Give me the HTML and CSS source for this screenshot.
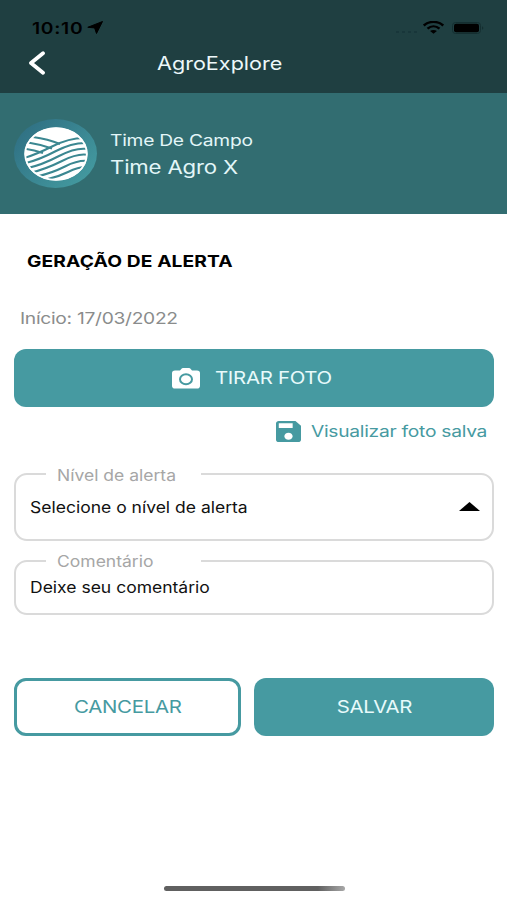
FILE: index.html
```html
<!DOCTYPE html>
<html lang="pt-BR">
<head>
    <meta charset="UTF-8">
    <meta name="viewport" content="width=device-width, initial-scale=1.0">
    <title>AgroExplore</title>
    <link rel="stylesheet" href="styles.css">
</head>
<body>

    <header class="header">
        <div class="status-bar">
            <span class="text status-time">10:10</span>
            <svg class="icon-location" viewBox="0 0 16 13" preserveAspectRatio="none"><path d="M15.500.5L.8 6.300l6.800.6L9.500 12.500z" stroke="#000" stroke-linejoin="round"/></svg>
            <div class="status-icons">
                <div class="signal"><i></i><i></i><i></i><i></i></div>
                <svg class="icon-wifi" viewBox="0 0 20 13" preserveAspectRatio="none">
                    <path d="M.8 4.500C6-.3 14-.3 19.200 4.500M4.300 7.600c3.400-3 8-3 11.400 0" fill="none" stroke="#000" stroke-width="2.400"/>
                    <path d="M10 12.800L6.700 10c1.900-1.500 4.700-1.500 6.600 0z"/>
                </svg>
                <svg class="icon-battery" viewBox="0 0 32 12">
                    <rect x=".5" y=".5" width="28" height="11" rx="3" fill="none" stroke="#142e30"/>
                    <rect x="2" y="1.700" width="25" height="8.600" rx="2"/>
                    <path d="M30 4.200c1.800.6 1.800 3 0 3.600z" fill="#142e30"/>
                </svg>
            </div>
        </div>
        <div class="title-bar">
            <svg class="icon-back" viewBox="0 0 18 24"><path d="M15 2.200L3 12l12 9.800" fill="none" stroke="#fff" stroke-width="3.800" stroke-linecap="round" stroke-linejoin="round"/></svg>
            <h1 class="text title">AgroExplore</h1>
        </div>
    </header>

    <section class="team">
        <div class="team-logo">
            <svg viewBox="0 0 64 54" preserveAspectRatio="none">
                <defs><clipPath id="field"><ellipse cx="32" cy="27" rx="31" ry="26"/></clipPath></defs>
                <ellipse cx="32" cy="27" rx="31.500" ry="26.500" fill="#fff"/>
                <g clip-path="url(#field)" fill="none" stroke="#3b8791" stroke-width="2">
                    <path d="M9 10Q24 12 36 17M4 15.500Q17 17.500 28 21.500M0 21.500Q10 23 19 26"/>
                    <path d="M0 31Q11 28 28 19.500T60 11M0 36.500Q15 33 32 24T64 16M2 41.500Q18 38 35 29T64 22M6 46Q22 42 38 34T64 28M13 49.500Q28 46 41 39.500T64 34M22 52.500Q34 50 44 45T62 40"/>
                </g>
                <ellipse cx="32" cy="27" rx="30.800" ry="25.800" fill="none" stroke="#fff" stroke-width="1.800"/>
            </svg>
        </div>
        <div class="team-info">
            <div class="text team-label">Time De Campo</div>
            <div class="text team-name">Time Agro X</div>
        </div>
    </section>

    <main class="content">
        <h2 class="text heading">GERAÇÃO DE ALERTA</h2>
        <div class="text start-date">Início: 17/03/2022</div>

        <button class="btn btn-photo">
            <svg class="icon-camera" viewBox="0 0 28 21">
                <path d="M3 2.500h5L9.500.8Q10 0 11 0h6q1 0 1.500.8L20 2.500h5q3 0 3 2.800v12.400q0 2.800-3 2.800H3q-3 0-3-2.800V5.300q0-2.800 3-2.800z" fill="#fff"/>
                <ellipse cx="14" cy="11.300" rx="6" ry="5" fill="none" stroke="#469aa1" stroke-width="2"/>
            </svg>
            <span class="text photo-text">TIRAR FOTO</span>
        </button>

        <a class="saved-photo">
            <svg class="icon-save" viewBox="3 3 18 18" preserveAspectRatio="none"><path d="M17 3H5c-1.110 0-2 .9-2 2v14c0 1.100.89 2 2 2h14c1.100 0 2-.9 2-2V7l-4-4zm-5 16c-1.660 0-3-1.340-3-3s1.340-3 3-3 3 1.340 3 3-1.340 3-3 3zm3-10H5V5h10v4z"/></svg>
            <span class="text saved-text">Visualizar foto salva</span>
        </a>

        <fieldset class="field field-level">
            <legend><span class="text">Nível de alerta</span></legend>
            <span class="text field-text">Selecione o nível de alerta</span>
            <svg class="icon-arrow" viewBox="0 0 22 9" preserveAspectRatio="none"><path d="M11 0l11 9H0z"/></svg>
        </fieldset>

        <fieldset class="field field-comment">
            <legend><span class="text">Comentário</span></legend>
            <span class="text field-text">Deixe seu comentário</span>
        </fieldset>

        <div class="actions">
            <button class="btn btn-cancel"><span class="text">CANCELAR</span></button>
            <button class="btn btn-save"><span class="text">SALVAR</span></button>
        </div>
    </main>

    <div class="home-indicator"></div>

</body>
</html>
```
FILE: styles.css
```css
* {
    box-sizing: border-box;
}

body {
    font-family: Inter, "Liberation Sans", sans-serif;
    margin: 0;
    height: 900px;
    display: flex;
    flex-direction: column;
    background-color: #fff;
    color: #000;
    overflow: hidden;
}

svg {
    display: block;
    flex: none;
}

/* wide lettering */
.text {
    display: block;
    width: max-content;
    white-space: nowrap;
    font-weight: 400;
    margin: 0;
    transform: scaleX(1.2);
    transform-origin: left center;
}

.header {
    height: 93px;
    background-color: #1f3f41;
}

.status-bar {
    display: flex;
    align-items: center;
    height: 43px;
    padding: 12px 23px 0 32px;
}

.status-time {
    font-size: 16px;
    font-weight: 600;
    line-height: 20px;
    letter-spacing: 0.6px;
    width: 55px;
}

.icon-location {
    width: 16px;
    height: 13px;
}

.status-icons {
    display: flex;
    align-items: center;
    margin-left: auto;
}

.signal {
    display: flex;
    gap: 3px;
    margin: 8px 6px 0 0;
}

.signal i {
    width: 3px;
    height: 2px;
    background-color: #18363a;
}

.icon-wifi {
    width: 21px;
    height: 13px;
    margin-right: 8px;
}

.icon-battery {
    width: 32px;
    height: 12px;
}

.title-bar {
    display: flex;
    align-items: center;
    height: 40px;
    padding-left: 28px;
}

.icon-back {
    width: 18px;
    height: 24px;
    margin-right: 111px;
}

.title {
    font-size: 18px;
    color: #edf8fa;
}

.team {
    display: flex;
    align-items: center;
    height: 121px;
    padding: 0 14px;
    background-color: #326d71;
}

.team-logo {
    display: flex;
    align-items: center;
    justify-content: center;
    width: 83px;
    height: 69px;
    margin-right: 13px;
    border-radius: 50%;
    background: linear-gradient(135deg, #2d6b80, #469fa3);
}

.team-logo svg {
    width: 64px;
    height: 54px;
}

.team-info {
    padding-top: 2px;
    color: #e3f6f8;
}

.team-label {
    font-size: 16px;
    line-height: 24px;
    letter-spacing: -0.2px;
}

.team-name {
    font-size: 18.5px;
    line-height: 30px;
    letter-spacing: -0.15px;
}

.content {
    display: flex;
    flex-direction: column;
    padding: 0 13px 0 14px;
}

.heading {
    margin: 36px 0 0 13px;
    font-size: 16px;
    font-weight: 700;
    line-height: 22px;
    letter-spacing: 0.1px;
}

.start-date {
    margin: 35px 0 0 6px;
    font-size: 16px;
    line-height: 22px;
    letter-spacing: -0.24px;
    color: #8a8c8c;
}

.btn {
    display: flex;
    align-items: center;
    justify-content: center;
    height: 58px;
    padding: 0;
    border: none;
    border-radius: 12px;
    background-color: #469aa1;
    color: #e8fafb;
    font-family: inherit;
    font-size: 17px;
    letter-spacing: -0.25px;
    cursor: pointer;
}

.btn-photo {
    justify-content: flex-start;
    margin-top: 20px;
    padding-left: 158px;
}

.icon-camera {
    width: 28px;
    height: 21px;
    margin-right: 15px;
}

.saved-photo {
    display: flex;
    align-items: center;
    margin: 13px 0 0 262px;
    height: 22px;
    color: #469aa1;
    font-size: 16px;
    letter-spacing: -0.22px;
}

.icon-save {
    width: 25px;
    height: 21px;
    margin-right: 10px;
    fill: #469aa1;
}

.field {
    display: flex;
    justify-content: space-between;
    align-items: flex-start;
    min-width: 0;
    margin: 0;
    border: 2px solid #dadada;
    border-radius: 13px;
    font-size: 15.5px;
    line-height: 20px;
}

.field .text {
    transform: scaleX(1.13);
}

.field legend {
    width: 155px;
    padding: 3px 0 0 11px;
    color: #a6a6a6;
}

.field-level {
    height: 78.5px;
    margin-top: 20.5px;
    padding: 12px 12px 0 30px;
}

.field-comment {
    height: 66px;
    margin-top: 8px;
    padding: 5.5px 12px 0 30px;
}

.field-text {
    margin-left: -16px;
    color: #111;
}

.icon-arrow {
    width: 21px;
    height: 9px;
    margin-top: 4.5px;
}

.actions {
    display: flex;
    gap: 13px;
    margin-top: 63px;
}

.actions .text {
    transform-origin: center;
}

.btn-cancel {
    width: 227px;
    border: 3px solid #469aa1;
    background-color: #fff;
    color: #469aa1;
}

.btn-save {
    flex: 1;
}

.home-indicator {
    width: 181px;
    height: 5px;
    margin: auto 0 9px 164px;
    border-radius: 3px;
    background: linear-gradient(to right, #606060 85%, #a8a8a8);
}
```
